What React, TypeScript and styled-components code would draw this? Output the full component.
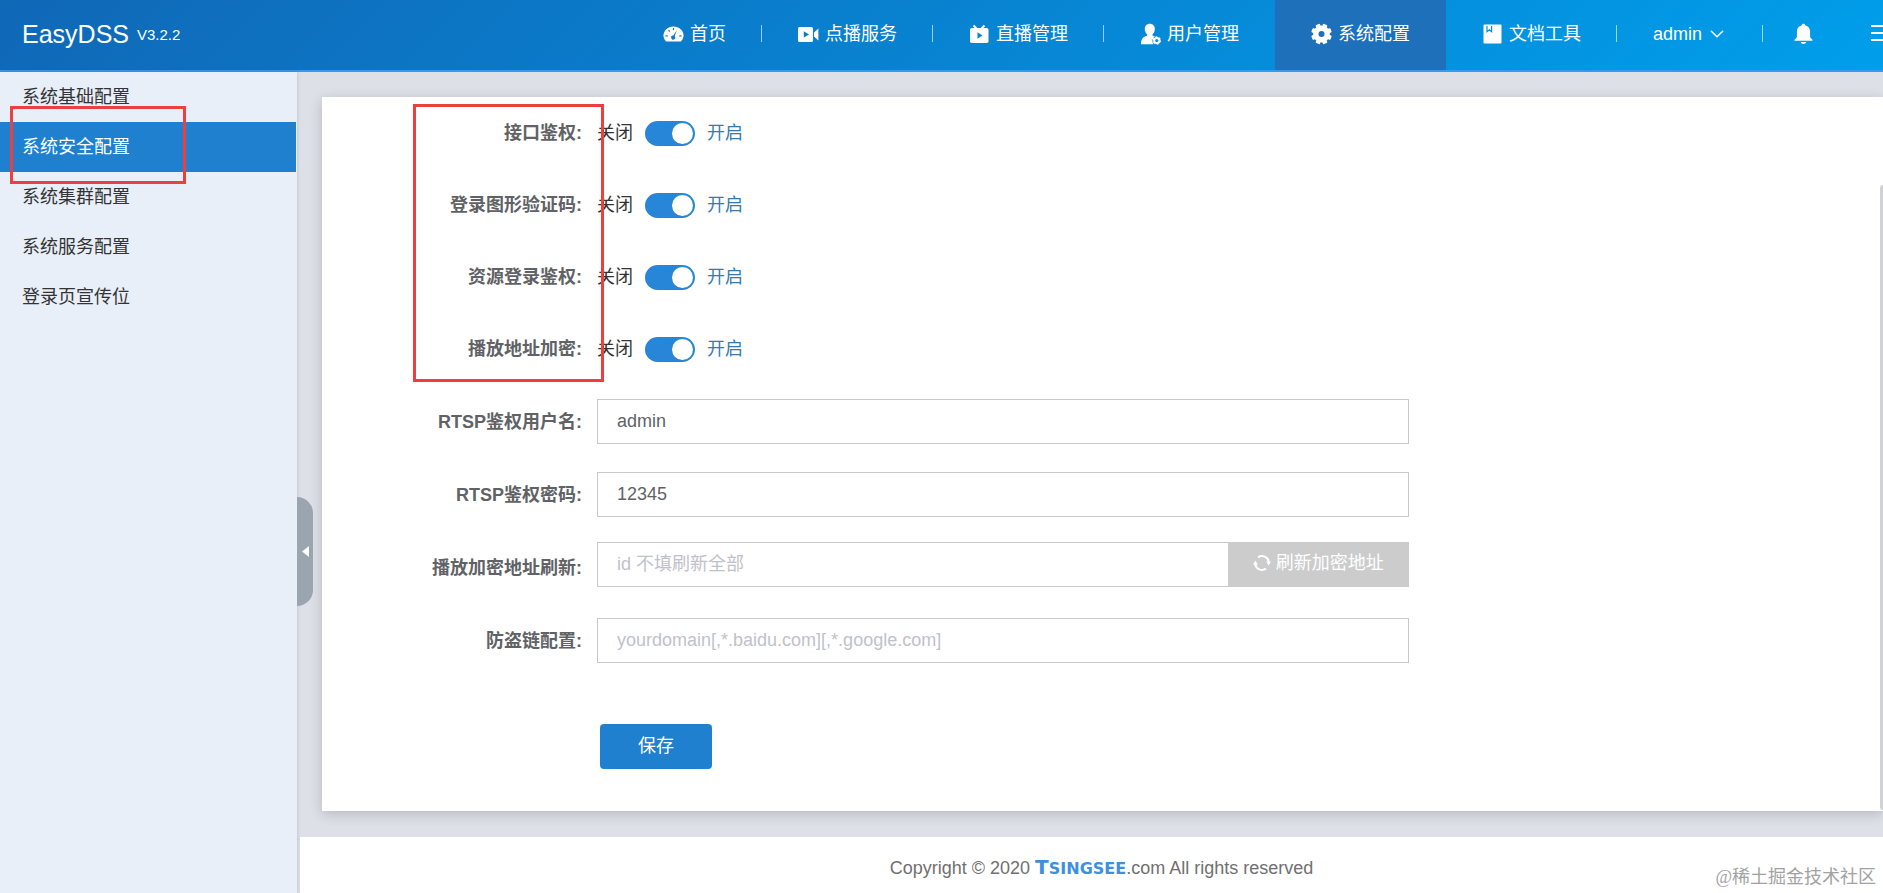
import React, { useState } from "react";
import styled, { createGlobalStyle } from "styled-components";

const GlobalStyle = createGlobalStyle`
  *, *::before, *::after { box-sizing: border-box; }
  body {
    margin: 0;
    color: #333;
    font: 18px/24px "Liberation Sans", "Noto Sans CJK SC", sans-serif;
    overflow-x: hidden;
  }
  button, input { font: inherit; }
  button { border: 0; padding: 0; cursor: pointer; background: none; color: inherit; }
  a { color: inherit; text-decoration: none; }
`;

const Page = styled.div`
  position: relative;
  min-height: 100vh;
  display: flex;
  flex-direction: column;
  overflow: hidden;
`;

const Header = styled.header`
  display: flex;
  align-items: stretch;
  height: 72px;
  flex: none;
  color: #fff;
  background: linear-gradient(-45deg, #009eeb, #1068b7);
  border-bottom: 2px solid #369af3;
`;

const Brand = styled.a`
  display: flex;
  align-items: center;
  gap: 8px;
  padding: 0 0 2px 22px;
  font-size: 25px;
`;

const Version = styled.span`
  padding-top: 2px;
  font-size: 15px;
`;

const Nav = styled.nav`
  display: flex;
  margin-left: auto;
  margin-right: -8px;
`;

const NavItem = styled.a<{ $active?: boolean; $divider?: boolean; $wide?: boolean }>`
  position: relative;
  display: flex;
  align-items: center;
  gap: ${(p) => (p.$wide ? 8 : 6)}px;
  padding: 0 ${(p) => (p.$wide ? 39 : 36)}px 2px 36px;
  white-space: nowrap;
  background: ${(p) => (p.$active ? "#1f70ba" : "transparent")};
  &::after {
    content: "";
    display: ${(p) => (p.$divider ? "block" : "none")};
    position: absolute;
    right: 0;
    top: 25px;
    width: 1px;
    height: 17px;
    background: rgba(255, 255, 255, 0.6);
  }
`;

const IconButton = styled.button`
  display: flex;
  align-items: center;
  padding: 0 0 2px 31px;
  & + & {
    padding: 0 0 4px 58px;
  }
`;

const Body = styled.div`
  position: relative;
  display: flex;
  flex: 1;
`;

const Sidebar = styled.aside`
  position: relative;
  width: 297px;
  flex: none;
  background: #e8eff8;
  box-shadow: 0 0 4px rgba(0, 0, 0, 0.16);
  z-index: 1;
`;

const SideLink = styled.a<{ $active?: boolean }>`
  display: flex;
  align-items: center;
  height: 50px;
  margin-right: 1px;
  padding-left: 22px;
  color: ${(p) => (p.$active ? "#fff" : "#333")};
  background: ${(p) => (p.$active ? "#2080d0" : "transparent")};
`;

const Collapse = styled.button`
  position: absolute;
  left: 100%;
  top: 425px;
  width: 16px;
  height: 109px;
  display: flex;
  align-items: center;
  justify-content: center;
  background: #9ba5b0;
  border-radius: 0 16px 16px 0;
`;

const SideFrame = styled.div`
  position: absolute;
  left: 10px;
  top: 34px;
  width: 176px;
  height: 78px;
  border: 3px solid #ee3f3f;
  pointer-events: none;
`;

const Main = styled.main`
  flex: 1;
  min-width: 0;
  display: flex;
  flex-direction: column;
  background: #dde0e7;
`;

const Card = styled.section`
  position: relative;
  flex: 1;
  margin: 25px 0 26px 25px;
  padding-bottom: 42px;
  background: #fff;
  box-shadow: 0 3px 12px rgba(0, 0, 0, 0.18);
`;

const FormFrame = styled(SideFrame)`
  left: 91px;
  top: 7px;
  width: 191px;
  height: 278px;
`;

const ScrollThumb = styled.div`
  position: absolute;
  right: 0;
  top: 88px;
  bottom: 1px;
  width: 3px;
  border-radius: 3px 0 0 3px;
  background: #cfd2d7;
`;

const Row = styled.div<{ $height: number }>`
  display: grid;
  grid-template-columns: 275px 52%;
  align-items: center;
  height: ${(p) => p.$height}px;
`;

const Label = styled.label`
  padding-right: 15px;
  text-align: right;
  font-weight: bold;
  color: #606266;
  white-space: nowrap;
`;

const SwitchLine = styled.div`
  display: flex;
  align-items: center;
  gap: 12px;
`;

const OnText = styled.span`
  color: #337ab7;
`;

const Switch = styled.input`
  appearance: none;
  position: relative;
  width: 50px;
  height: 25px;
  margin: 0;
  border-radius: 13px;
  background: #bbb;
  cursor: pointer;
  &::after {
    content: "";
    position: absolute;
    top: 2px;
    left: 3px;
    width: 21px;
    height: 21px;
    border-radius: 50%;
    background: #fff;
  }
  &:checked { background: #2886d8; }
  &:checked::after { left: 27px; }
`;

const TextInput = styled.input`
  display: block;
  flex: 1;
  width: 100%;
  min-width: 0;
  height: 45px;
  padding: 0 19px;
  border: 1px solid #c8c8c8;
  border-radius: 0;
  background: #fff;
  color: #606266;
  outline: none;
  &::placeholder { color: #bfc2ca; opacity: 1; }
`;

const InputGroup = styled.div`
  display: flex;
  margin-bottom: 6px;
  & > input { border-right: 0; }
`;

const RefreshButton = styled.button`
  display: flex;
  align-items: center;
  gap: 5px;
  padding: 0 25px 4px;
  color: #fff;
  background: #ccc;
  white-space: nowrap;
`;

const SaveButton = styled.button`
  display: block;
  width: 112px;
  height: 45px;
  margin: 47px 0 0 278px;
  padding-bottom: 2px;
  border-radius: 4px;
  color: #fff;
  background: #2080d0;
`;

const Footer = styled.footer`
  display: flex;
  align-items: center;
  justify-content: center;
  height: 56px;
  margin-left: 3px;
  padding: 6px 0 0 20px;
  background: #fff;
  color: #707070;
  white-space: pre;
`;

const Wordmark = styled.a`
  display: inline-block;
  font: bold 16px/24px "DejaVu Sans", sans-serif;
  color: #3c90df;
  &::first-letter { font-size: 20px; }
`;

const Watermark = styled.div`
  position: absolute;
  right: 7px;
  bottom: 4px;
  font-family: "Liberation Serif", "Noto Sans CJK SC", serif;
  color: #a2a2a2;
`;

const DashboardIcon = () => (
  <svg width="21" height="20" viewBox="0 0 21 20" fill="none" aria-hidden="true">
    <path d="M3 17.5A10.2 10.2 0 0 1 .4 12C.4 6.300 4.900 2.400 10.500 2.400S20.600 6.300 20.600 12A10.200 10.200 0 0 1 18 17.500Z" fill="#fff" />
    <path d="M10.500 4v2M5.500 6.200l1.200 1.300M2.500 11.800h2.200M16.300 11.800h2.200" stroke="#0b7bcb" strokeWidth="1.200" />
    <path d="M13.800 6.200 11.700 12.300a2 2 0 1 1-1.400-.7Z" fill="#0b7bcb" />
  </svg>
);

const VideoIcon = () => (
  <svg width="21" height="20" viewBox="0 0 21 20" aria-hidden="true">
    <rect y="3" width="15" height="15" rx="1.500" fill="#fff" />
    <path d="M16 8.600 20.400 4.600V16.400L16 12.400Z" fill="#fff" />
    <path d="M5.800 7.200v6.400L11 10.400Z" fill="#0b7bcb" />
  </svg>
);

const TvIcon = () => (
  <svg width="21" height="20" viewBox="0 0 21 20" aria-hidden="true">
    <path d="M4.500 1.500 7.500 4.500M15.500 1.500 12.500 4.500" stroke="#fff" strokeWidth="2" />
    <rect x="1" y="4" width="18.500" height="15" rx="1.800" fill="#fff" />
    <path d="M8.500 8.200v6.600l5-3.300Z" fill="#0883d6" />
  </svg>
);

const UserIcon = () => (
  <svg width="21" height="22" viewBox="0 0 21 22" aria-hidden="true">
    <path d="M9.800.8c3 0 5 2.200 5 5.200 0 2.200-.8 4.200-2.200 5.300v1.400l2.400.8c-1.600 1-2.600 2.500-2.600 4.300 0 1.300.4 2.400 1.200 3.400H1C1 16.500 2.200 14.200 7 12.700v-1.400C5.600 10.200 4.800 8.200 4.800 6c0-3 2-5.200 5-5.200Z" fill="#fff" />
    <circle cx="16.800" cy="17.500" r="2.600" fill="none" stroke="#fff" strokeWidth="2" />
    <circle cx="16.800" cy="17.500" r="3.600" fill="none" stroke="#fff" strokeWidth="1.200" strokeDasharray="1.900 1.870" />
  </svg>
);

const GearIcon = () => (
  <svg width="21" height="22" viewBox="-10.500 -11 21 22" aria-hidden="true">
    <circle r="5.700" fill="none" stroke="#fff" strokeWidth="5.400" />
    {[22.5, 67.5, 112.5, 157.5, 202.5, 247.5, 292.5, 337.5].map((a) => (
      <rect key={a} x="-2.300" y="-10.300" width="4.600" height="4.500" rx="1" fill="#fff" transform={`rotate(${a})`} />
    ))}
  </svg>
);

const BookIcon = () => (
  <svg width="21" height="20" viewBox="0 0 21 20" aria-hidden="true">
    <rect x="1.500" y=".5" width="18" height="19" rx="1" fill="#fff" />
    <path d="M5 2v5.700L7.300 5.800 9.600 7.700V2" fill="none" stroke="#0591e2" strokeWidth="1.200" />
  </svg>
);

const ChevronIcon = () => (
  <svg width="14" height="10" viewBox="0 0 14 10" fill="none" stroke="#fff" strokeWidth="1.500" aria-hidden="true">
    <path d="m.8 1.800 6.200 6 6.200-6" />
  </svg>
);

const BellIcon = () => (
  <svg width="19" height="22" viewBox="0 0 19 22" fill="#fff" aria-hidden="true">
    <path d="M9.500.8c1 0 1.600.6 1.700 1.400 3.300.8 4.900 3.300 4.900 6.600v5.500l2.400 2.500v1H.5v-1l2.400-2.500V8.800c0-3.300 1.600-5.800 4.900-6.600.1-.8.700-1.400 1.700-1.400Z" />
    <path d="M6.700 19h5.600c-.4 1.300-1.400 2-2.800 2s-2.400-.7-2.800-2Z" />
  </svg>
);

const MenuIcon = () => (
  <svg width="20" height="18" viewBox="0 0 20 18" stroke="#fff" strokeWidth="2" aria-hidden="true">
    <path d="M0 2h20M0 9h20M0 16h20" />
  </svg>
);

const RefreshIcon = () => (
  <svg width="18" height="18" viewBox="0 0 18 18" aria-hidden="true">
    <path d="M5 3.400A7 7 0 0 1 15.900 8M13 14.600A7 7 0 0 1 2.100 10" fill="none" stroke="#fff" strokeWidth="2" />
    <path d="M0 10.600 2.300 6.500 5 10.600ZM13 7.400h5l-2.300 4.100Z" fill="#fff" />
  </svg>
);

const navItems = [
  { text: "首页", Icon: DashboardIcon, divider: true },
  { text: "点播服务", Icon: VideoIcon, divider: true },
  { text: "直播管理", Icon: TvIcon, divider: true },
  { text: "用户管理", Icon: UserIcon },
  { text: "系统配置", Icon: GearIcon, active: true },
  { text: "文档工具", Icon: BookIcon, divider: true },
];

const sideItems = ["系统基础配置", "系统安全配置", "系统集群配置", "系统服务配置", "登录页宣传位"];

const switches = [
  { id: "api-auth", text: "接口鉴权:" },
  { id: "captcha", text: "登录图形验证码:" },
  { id: "resource-auth", text: "资源登录鉴权:" },
  { id: "url-encrypt", text: "播放地址加密:" },
];

function SwitchRow({ id, text }: { id: string; text: string }) {
  const [on, setOn] = useState(true);
  return (
    <Row $height={72}>
      <Label htmlFor={id}>{text}</Label>
      <SwitchLine>
        <span>关闭</span>
        <Switch id={id} type="checkbox" role="switch" checked={on} onChange={() => setOn(!on)} />
        <OnText>开启</OnText>
      </SwitchLine>
    </Row>
  );
}

export default function App() {
  return (
    <Page>
      <GlobalStyle />
      <Header>
        <Brand href="#">
          EasyDSS <Version>V3.2.2</Version>
        </Brand>
        <Nav>
          {navItems.map(({ text, Icon, active, divider }) => (
            <NavItem key={text} href="#" $active={active} $divider={divider}>
              <Icon />
              {text}
            </NavItem>
          ))}
          <NavItem href="#" $divider $wide>
            admin <ChevronIcon />
          </NavItem>
          <IconButton aria-label="通知">
            <BellIcon />
          </IconButton>
          <IconButton aria-label="菜单">
            <MenuIcon />
          </IconButton>
        </Nav>
      </Header>
      <Body>
        <Sidebar>
          {sideItems.map((text, i) => (
            <SideLink key={text} href="#" $active={i === 1}>
              {text}
            </SideLink>
          ))}
          <SideFrame />
          <Collapse aria-label="收起">
            <svg width="7" height="11" viewBox="0 0 7 11" aria-hidden="true">
              <path d="M7 0v11L0 5.500Z" fill="#fff" />
            </svg>
          </Collapse>
        </Sidebar>
        <Main>
          <Card>
            <form onSubmit={(e) => e.preventDefault()}>
              {switches.map((s) => (
                <SwitchRow key={s.id} {...s} />
              ))}
              <Row $height={73}>
                <Label htmlFor="rtsp-user">RTSP鉴权用户名:</Label>
                <TextInput id="rtsp-user" defaultValue="admin" />
              </Row>
              <Row $height={73}>
                <Label htmlFor="rtsp-pass">RTSP鉴权密码:</Label>
                <TextInput id="rtsp-pass" defaultValue="12345" />
              </Row>
              <Row $height={73}>
                <Label htmlFor="refresh-id">播放加密地址刷新:</Label>
                <InputGroup>
                  <TextInput id="refresh-id" placeholder="id 不填刷新全部" />
                  <RefreshButton type="button">
                    <RefreshIcon />
                    刷新加密地址
                  </RefreshButton>
                </InputGroup>
              </Row>
              <Row $height={73}>
                <Label htmlFor="referer">防盗链配置:</Label>
                <TextInput id="referer" placeholder="yourdomain[,*.baidu.com][,*.google.com]" />
              </Row>
              <SaveButton type="submit">保存</SaveButton>
            </form>
            <FormFrame />
            <ScrollThumb />
          </Card>
          <Footer>
            {"Copyright © 2020 "}
            <Wordmark href="#">TSINGSEE</Wordmark>
            {".com All rights reserved"}
          </Footer>
        </Main>
      </Body>
      <Watermark>@稀土掘金技术社区</Watermark>
    </Page>
  );
}
